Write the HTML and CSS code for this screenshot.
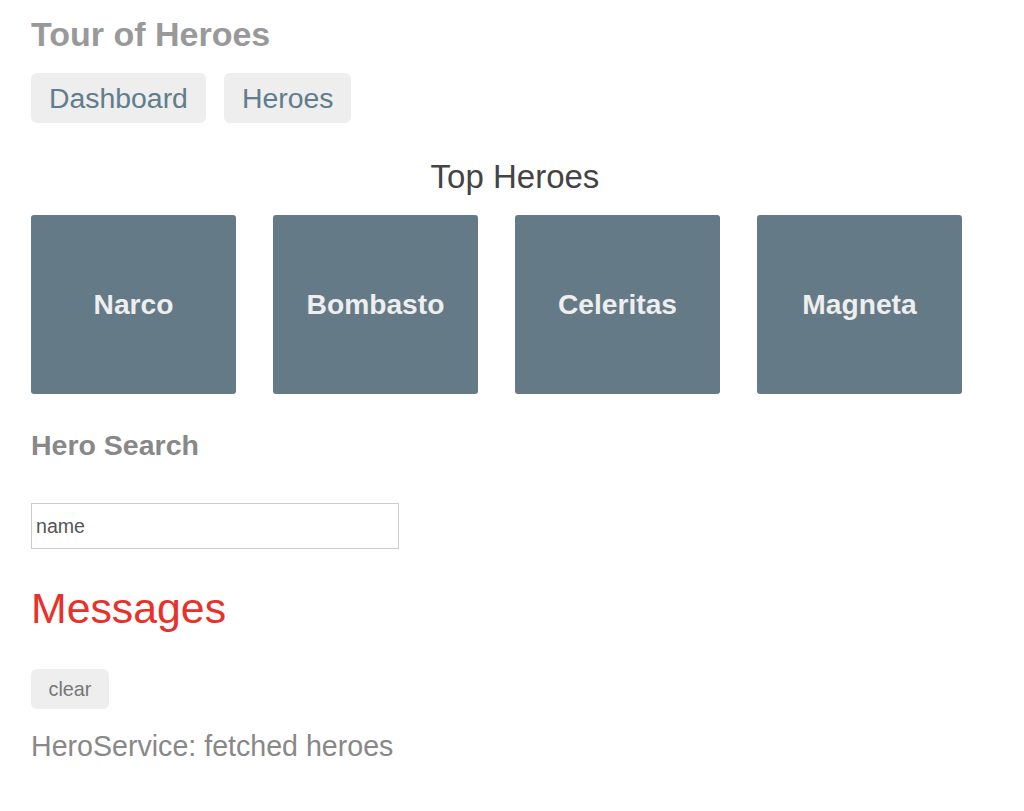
FILE: index.html
```html
<!DOCTYPE html>
<html>
<head>
<meta charset="utf-8">
<title>Tour of Heroes</title>
<link rel="stylesheet" href="styles.css">
</head>
<body>
<div class="app">
  <h1 class="title">Tour of Heroes</h1>
  <nav class="nav">
    <a class="nav-link" href="#">Dashboard</a>
    <a class="nav-link" href="#">Heroes</a>
  </nav>
  <h3 class="top-title">Top Heroes</h3>
  <div class="grid">
    <a class="card" href="#">Narco</a>
    <a class="card" href="#">Bombasto</a>
    <a class="card" href="#">Celeritas</a>
    <a class="card" href="#">Magneta</a>
  </div>
  <h4 class="search-title">Hero Search</h4>
  <input class="search-box" type="text" placeholder="name">
  <h2 class="messages-title">Messages</h2>
  <button class="clear">clear</button>
  <div class="message">HeroService: fetched heroes</div>
</div>
</body>
</html>
```
FILE: styles.css
```css
html, body {
  margin: 0;
  padding: 0;
  background: #fff;
}
body {
  font-family: "Liberation Sans", Arial, sans-serif;
}
.app {
  padding: 14px 25px 0 31px;
  display: flex;
  flex-direction: column;
  align-items: flex-start;
}
.title {
  margin: 0;
  font-size: 34px;
  line-height: 40px;
  font-weight: bold;
  color: #999;
}
.nav {
  margin-top: 19px;
  display: flex;
  gap: 18px;
}
.nav-link {
  display: block;
  height: 50px;
  line-height: 50px;
  padding: 0 18px;
  font-size: 28.4px;
  color: #607d8b;
  background: #eee;
  border-radius: 6px;
  text-decoration: none;
}
.top-title {
  align-self: stretch;
  text-align: center;
  margin: 34px 0 0;
  font-size: 33px;
  line-height: 40px;
  font-weight: normal;
  color: #444;
}
.grid {
  margin-top: 18px;
  display: flex;
  gap: 37px;
}
.card {
  width: 205px;
  height: 179px;
  display: flex;
  align-items: center;
  justify-content: center;
  background: #657a87;
  border-radius: 3px;
  color: #eee;
  font-size: 28.2px;
  font-weight: bold;
  text-decoration: none;
}
.search-title {
  margin: 34px 0 0;
  font-size: 28.5px;
  line-height: 34px;
  font-weight: bold;
  color: #888;
}
.search-box {
  margin: 41px 0 0;
  box-sizing: border-box;
  width: 368px;
  height: 46px;
  padding: 0 4px;
  border: 1px solid #ccc;
  font-family: "Liberation Sans", Arial, sans-serif;
  font-size: 19.6px;
  color: #555;
  outline: none;
}
.search-box::placeholder {
  color: #555;
  opacity: 1;
}
.messages-title {
  margin: 34px 0 0;
  font-size: 42.8px;
  line-height: 50px;
  font-weight: normal;
  color: #e8312a;
}
.clear {
  margin-top: 36px;
  width: 78px;
  height: 40px;
  border: none;
  border-radius: 6px;
  background: #eee;
  color: #777;
  font-family: "Liberation Sans", Arial, sans-serif;
  font-size: 19.8px;
  padding: 0;
}
.message {
  margin-top: 20px;
  font-size: 28.6px;
  line-height: 34px;
  color: #888;
}
```
